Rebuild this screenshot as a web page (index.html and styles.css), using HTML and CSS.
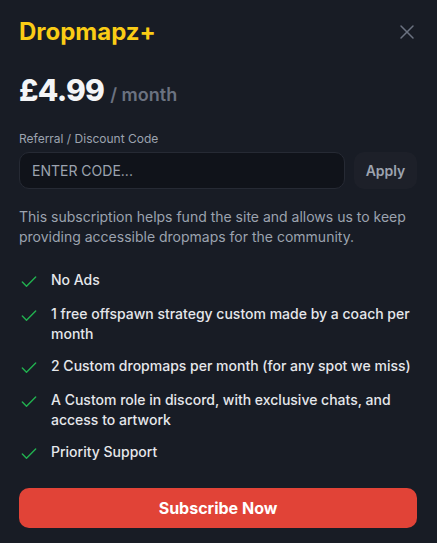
FILE: index.html
```html
<!DOCTYPE html>
<html lang="en">
<head>
<meta charset="utf-8">
<link rel="stylesheet" href="styles.css">
</head>
<body>
<div class="modal">
  <div class="header">
    <h2 class="title">Dropmapz+</h2>
    <button class="close" aria-label="Close">
      <svg width="24" height="24" viewBox="0 0 24 24" fill="none" stroke="currentColor" stroke-width="1.5" stroke-linecap="round" stroke-linejoin="round"><path d="M18 6 6 18"/><path d="m6 6 12 12"/></svg>
    </button>
  </div>
  <div class="price"><span class="amount">£4.99</span><span class="period">/ month</span></div>
  <label class="label" for="code">Referral / Discount Code</label>
  <div class="code-row">
    <input id="code" class="code-input" type="text" placeholder="ENTER CODE...">
    <button class="apply">Apply</button>
  </div>
  <p class="desc">This subscription helps fund the site and allows us to keep providing accessible dropmaps for the community.</p>
  <ul class="features">
    <li><svg class="check" width="20" height="20" viewBox="0 0 24 24" fill="none" stroke="currentColor" stroke-linecap="round" stroke-linejoin="round"><path d="M20 6 9 17l-5-5"/></svg><span>No Ads</span></li>
    <li><svg class="check" width="20" height="20" viewBox="0 0 24 24" fill="none" stroke="currentColor" stroke-linecap="round" stroke-linejoin="round"><path d="M20 6 9 17l-5-5"/></svg><span>1 free offspawn strategy custom made by a coach per month</span></li>
    <li><svg class="check" width="20" height="20" viewBox="0 0 24 24" fill="none" stroke="currentColor" stroke-linecap="round" stroke-linejoin="round"><path d="M20 6 9 17l-5-5"/></svg><span>2 Custom dropmaps per month (for any spot we miss)</span></li>
    <li><svg class="check" width="20" height="20" viewBox="0 0 24 24" fill="none" stroke="currentColor" stroke-linecap="round" stroke-linejoin="round"><path d="M20 6 9 17l-5-5"/></svg><span>A Custom role in discord, with exclusive chats, and access to artwork</span></li>
    <li><svg class="check" width="20" height="20" viewBox="0 0 24 24" fill="none" stroke="currentColor" stroke-linecap="round" stroke-linejoin="round"><path d="M20 6 9 17l-5-5"/></svg><span>Priority Support</span></li>
  </ul>
  <button class="subscribe">Subscribe Now</button>
</div>
</body>
</html>
```
FILE: styles.css
```css
* { box-sizing: border-box; }
html, body { margin: 0; padding: 0; background: #181c25; }
body { font-family: Inter, "Noto Sans", sans-serif; color: #e5e7eb; }
.modal { padding: 16px 20px 20px 19px; display: flex; flex-direction: column; }
.header { display: flex; justify-content: space-between; align-items: center; height: 32px; }
.title { margin: 0; font-size: 24px; line-height: 32px; font-weight: 700; color: #facc15; }
.close { background: none; border: 0; padding: 0; margin-right: -2px; color: #6b7280; display: flex; }
.price { margin-top: 24px; display: flex; align-items: baseline; gap: 6px; }
.amount { font-size: 30px; line-height: 36px; font-weight: 800; letter-spacing: -0.025em; color: #f3f4f6; }
.period { font-size: 18px; font-weight: 600; color: #6b7280; }
.label { margin-top: 23px; font-size: 12px; line-height: 16px; color: #9ca3af; }
.code-row { margin-top: 5px; display: flex; gap: 9px; }
.code-input { flex: 1; height: 37px; border-radius: 10px; border: 1px solid #262a34; background: #10131a; color: #e5e7eb; padding: 0 12px; font-family: inherit; font-size: 14px; outline: none; }
.code-input::placeholder { color: #9ca3af; }
.apply { width: 63px; height: 37px; border: 0; border-radius: 10px; background: #1d2029; color: #9ca3af; font-family: inherit; font-size: 14px; font-weight: 600; }
.desc { margin: 18px 0 0; font-size: 14px; line-height: 20px; color: #9ca3af; }
.features { list-style: none; margin: 23px 0 0; padding: 0; display: flex; flex-direction: column; gap: 12px; }
.features li { display: flex; align-items: flex-start; gap: 12px; font-size: 14px; line-height: 20px; font-weight: 500; color: #e5e7eb; }
.check { flex: none; margin-top: 2px; color: #22b150; stroke-width: 1.7; }
.subscribe { margin-top: 24px; height: 40px; border: 0; border-radius: 10px; background: #e14337; color: #fff; font-family: inherit; font-size: 16px; font-weight: 700; }
```
